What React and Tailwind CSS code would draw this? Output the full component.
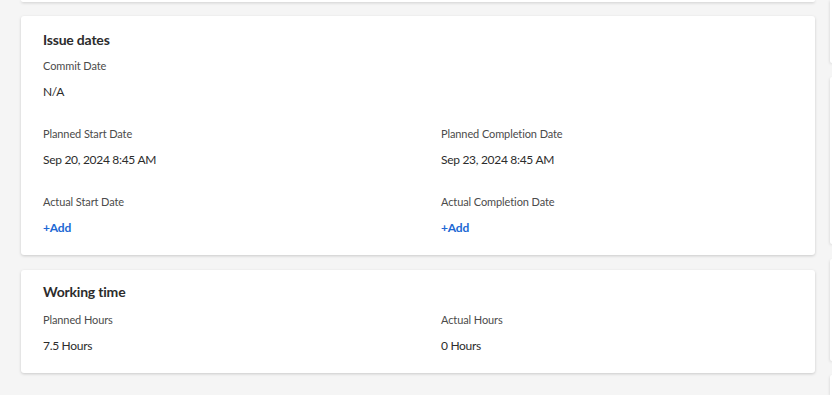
import React from "react";

const Field = ({ label, value, add }) => (
  <div>
    <div className="text-[11px] leading-[14px] tracking-[-0.1px] text-[#4b4b4b]">{label}</div>
    {add ? (
      <button className="mt-[11px] text-[12px] leading-[16px] tracking-[-0.2px] font-bold text-[#2068d4]">+Add</button>
    ) : (
      <div className="mt-[11px] text-[12px] leading-[16px] tracking-[-0.3px] text-[#2c2c2c]">{value}</div>
    )}
  </div>
);

const Card = ({ title, children, className = "" }) => (
  <div className={`bg-white rounded-[3px] shadow-[0_1px_3px_rgba(0,0,0,0.18)] px-[22px] ${className}`}>
    <h2 className="text-[14px] leading-[18px] tracking-[-0.2px] font-bold text-[#2c2c2c]">{title}</h2>
    {children}
  </div>
);

const App = () => {
  return (
    <div className="w-[832px] h-[395px] overflow-hidden bg-[#f5f5f5] flex font-['Lato',sans-serif]">
      <div className="w-[829px] shrink-0 pl-[21px] pr-[14px] flex flex-col">
        {/* card above, cut off */}
        <div className="h-[2px] bg-white shadow-[0_1px_3px_rgba(0,0,0,0.18)] rounded-b-[3px]" />

        <Card title="Issue dates" className="mt-[14px] h-[239px] pt-[15px]">
          <div className="mt-[10px]">
            <Field label="Commit Date" value="N/A" />
          </div>
          <div className="grid grid-cols-[398px_1fr] mt-[27px] gap-y-[27px]">
            <Field label="Planned Start Date" value="Sep 20, 2024 8:45 AM" />
            <Field label="Planned Completion Date" value="Sep 23, 2024 8:45 AM" />
            <Field label="Actual Start Date" add />
            <Field label="Actual Completion Date" add />
          </div>
        </Card>

        <Card title="Working time" className="mt-[15px] h-[103px] pt-[13px]">
          <div className="grid grid-cols-[398px_1fr] mt-[12px]">
            <Field label="Planned Hours" value="7.5 Hours" />
            <Field label="Actual Hours" value="0 Hours" />
          </div>
        </Card>
      </div>

      {/* next column, peeking in */}
      <div className="flex-1 flex flex-col ml-[1px]">
        <div className="h-[64px] bg-white shadow-[0_1px_3px_rgba(0,0,0,0.18)] rounded-bl-[3px]" />
        <div className="mt-[14px] h-[171px] bg-white shadow-[0_1px_3px_rgba(0,0,0,0.18)] rounded-l-[3px]" />
        <div className="mt-[15px] h-[104px] bg-white shadow-[0_1px_3px_rgba(0,0,0,0.18)] rounded-l-[3px]" />
        <div className="mt-[14px] h-[20px] bg-white shadow-[0_1px_3px_rgba(0,0,0,0.18)] rounded-tl-[3px]" />
      </div>
    </div>
  );
};

export default App;
